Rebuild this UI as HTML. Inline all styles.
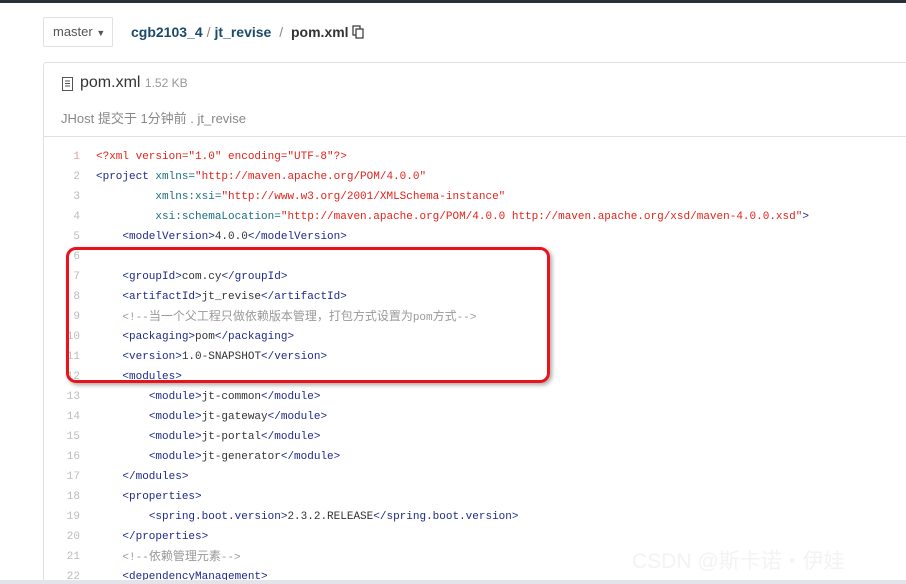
<!DOCTYPE html>
<html style="overflow:hidden;height:584px"><head><meta charset="utf-8"><style>
body{margin:0;width:906px;height:584px;overflow:hidden;background:#fff;position:relative;font-family:"Liberation Sans","Noto Sans CJK SC",sans-serif}
.top{position:absolute;left:0;top:0;width:906px;height:3px;background:#2b3038}
.br{position:absolute;left:43px;top:17px;width:70px;height:30px;border:1px solid #dfe2e5;border-radius:2px;box-sizing:border-box;font-size:13px;color:#555;line-height:28px;padding-left:9px}
.crumb{position:absolute;left:131px;top:24px;font-size:14px;font-weight:bold;color:#1b4a6b}
.crumb .s{color:#888;font-weight:normal;margin:0 4px}
.crumb .c{color:#333}
.box{position:absolute;left:43px;top:62px;width:900px;height:540px;border:1px solid #dfe2e5;border-radius:3px}
.hd{position:absolute;left:43px;top:136px;width:870px;height:1px;background:#dfe2e5}
.fn{position:absolute;left:80px;top:74px;font-size:16px;color:#333}
.fn small{font-size:12px;color:#999}
.cm{position:absolute;left:61px;top:108px;font-size:13px;color:#888}
.code{position:absolute;left:0;top:147px;font-family:"Liberation Mono","Noto Sans CJK SC",monospace;font-size:11px;line-height:20px;white-space:pre}
.ln{position:absolute;left:50px;width:30px;text-align:right;color:#bbb}
.l{position:absolute;left:96px;color:#333}
.t{color:#1d2a8c}.a{color:#1a6f80}.v{color:#e2231a}.g{color:#999}
.z{font-size:12px}
.red{position:absolute;left:66px;top:247px;width:484px;height:136px;border:3px solid #e8141a;border-radius:10px;box-sizing:border-box;box-shadow:2px 2px 4px rgba(0,0,0,.35)}
.wm{position:absolute;left:632px;top:545px;font-size:21px;color:#f3f3f3}
.bot{position:absolute;left:0;top:580px;width:906px;height:4px;background:#e3e3ea}
</style></head><body>
<div class="top"></div>
<div class="br">master <span style="font-size:9px">▼</span></div>
<div class="crumb">cgb2103_4<span class="s">/</span>jt_revise<span class="s"> / </span><span class="c">pom.xml</span> <svg width="12" height="14" viewBox="0 0 12 14" style="vertical-align:-2px"><rect x="1" y="1" width="7" height="9" fill="none" stroke="#333" stroke-width="1.2"/><rect x="4" y="4" width="7" height="9" fill="#fff" stroke="#333" stroke-width="1.2"/></svg></div>
<div class="box"></div>
<div class="hd"></div>
<svg style="position:absolute;left:62px;top:77px" width="11" height="14" viewBox="0 0 11 14"><rect x=".5" y=".5" width="10" height="13" fill="none" stroke="#555"/><path d="M3 4h5M3 6.5h5M3 9h5" stroke="#555"/></svg>
<div class="fn">pom.xml <small>1.52 KB</small></div>
<div class="cm">JHost 提交于 1分钟前 . jt_revise</div>
<div class="code">
<div class="ln" style="top:0;color:#e6a0a0">1</div><div class="l" style="top:0"><span class="v">&lt;?xml version="1.0" encoding="UTF-8"?&gt;</span></div>
<div class="ln" style="top:20px">2</div><div class="l" style="top:20px"><span class="t">&lt;project</span> <span class="a">xmlns=</span><span class="v">"http://maven.apache.org/POM/4.0.0"</span></div>
<div class="ln" style="top:40px">3</div><div class="l" style="top:40px">         <span class="a">xmlns:xsi=</span><span class="v">"http://www.w3.org/2001/XMLSchema-instance"</span></div>
<div class="ln" style="top:60px">4</div><div class="l" style="top:60px">         <span class="a">xsi:schemaLocation=</span><span class="v">"http://maven.apache.org/POM/4.0.0 http://maven.apache.org/xsd/maven-4.0.0.xsd"</span><span class="t">&gt;</span></div>
<div class="ln" style="top:80px">5</div><div class="l" style="top:80px">    <span class="t">&lt;modelVersion&gt;</span>4.0.0<span class="t">&lt;/modelVersion&gt;</span></div>
<div class="ln" style="top:100px">6</div>
<div class="ln" style="top:120px">7</div><div class="l" style="top:120px">    <span class="t">&lt;groupId&gt;</span>com.cy<span class="t">&lt;/groupId&gt;</span></div>
<div class="ln" style="top:140px">8</div><div class="l" style="top:140px">    <span class="t">&lt;artifactId&gt;</span>jt_revise<span class="t">&lt;/artifactId&gt;</span></div>
<div class="ln" style="top:160px">9</div><div class="l" style="top:160px">    <span class="g">&lt;!--<span class="z">当一个父工程只做依赖版本管理，打包方式设置为</span>pom<span class="z">方式</span>--&gt;</span></div>
<div class="ln" style="top:180px">10</div><div class="l" style="top:180px">    <span class="t">&lt;packaging&gt;</span>pom<span class="t">&lt;/packaging&gt;</span></div>
<div class="ln" style="top:200px">11</div><div class="l" style="top:200px">    <span class="t">&lt;version&gt;</span>1.0-SNAPSHOT<span class="t">&lt;/version&gt;</span></div>
<div class="ln" style="top:220px">12</div><div class="l" style="top:220px">    <span class="t">&lt;modules&gt;</span></div>
<div class="ln" style="top:240px">13</div><div class="l" style="top:240px">        <span class="t">&lt;module&gt;</span>jt-common<span class="t">&lt;/module&gt;</span></div>
<div class="ln" style="top:260px">14</div><div class="l" style="top:260px">        <span class="t">&lt;module&gt;</span>jt-gateway<span class="t">&lt;/module&gt;</span></div>
<div class="ln" style="top:280px">15</div><div class="l" style="top:280px">        <span class="t">&lt;module&gt;</span>jt-portal<span class="t">&lt;/module&gt;</span></div>
<div class="ln" style="top:300px">16</div><div class="l" style="top:300px">        <span class="t">&lt;module&gt;</span>jt-generator<span class="t">&lt;/module&gt;</span></div>
<div class="ln" style="top:320px">17</div><div class="l" style="top:320px">    <span class="t">&lt;/modules&gt;</span></div>
<div class="ln" style="top:340px">18</div><div class="l" style="top:340px">    <span class="t">&lt;properties&gt;</span></div>
<div class="ln" style="top:360px">19</div><div class="l" style="top:360px">        <span class="t">&lt;spring.boot.version&gt;</span>2.3.2.RELEASE<span class="t">&lt;/spring.boot.version&gt;</span></div>
<div class="ln" style="top:380px">20</div><div class="l" style="top:380px">    <span class="t">&lt;/properties&gt;</span></div>
<div class="ln" style="top:400px">21</div><div class="l" style="top:400px">    <span class="g">&lt;!--<span class="z">依赖管理元素</span>--&gt;</span></div>
<div class="ln" style="top:420px">22</div><div class="l" style="top:420px">    <span class="t">&lt;dependencyManagement&gt;</span></div>
</div>
<div class="red"></div>
<div class="wm">CSDN @斯卡诺・伊娃</div>
<div class="bot"></div>
</body></html>
